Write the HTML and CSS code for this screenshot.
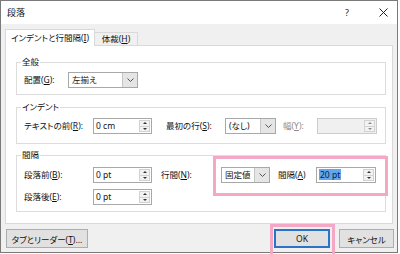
FILE: index.html
```html
<!DOCTYPE html>
<html lang="ja">
<head>
  <meta charset="UTF-8">
  <title>段落</title>
  <link rel="stylesheet" href="styles.css">
</head>
<body>

<div class="window">

  <!-- Title bar -->
  <div class="titlebar">
    <span class="title">段落</span>
    <span class="tb-help">?</span>
    <span class="tb-close">
      <svg width="9" height="9" viewBox="0 0 9 9"><path d="M0.5 0.5 L8.5 8.5 M8.5 0.5 L0.5 8.5" stroke="#222" stroke-width="1" fill="none"/></svg>
    </span>
  </div>

  <div class="body">

    <!-- Tabs -->
    <div class="tabs">
      <div class="tab active">インデントと行間隔(<u>I</u>)</div>
      <div class="tab">体裁(<u>H</u>)</div>
    </div>

    <div class="panel">

      <!-- General -->
      <fieldset class="group g1">
        <legend>全般</legend>
        <div class="row">
          <span class="lbl w-align-lbl">配置(<u>G</u>):</span>
          <div class="combo w-align">
            <span class="combo-text">左揃え</span>
            <span class="combo-btn"><svg width="7" height="4" viewBox="0 0 7 4"><path d="M0.5 0.5 L3.5 3.5 L6.5 0.5" stroke="#555" fill="none"/></svg></span>
          </div>
        </div>
      </fieldset>

      <!-- Indent -->
      <fieldset class="group g2">
        <legend>インデント</legend>
        <div class="row">
          <span class="lbl w-first">テキストの前(<u>R</u>):</span>
          <div class="spin w-small">
            <span class="spin-text">0 cm</span>
            <span class="spin-btns"><span class="up"></span><span class="dn"></span></span>
          </div>
          <span class="lbl w-firstline">最初の行(<u>S</u>):</span>
          <div class="combo w-none">
            <span class="combo-text">(なし)</span>
            <span class="combo-btn"><svg width="7" height="4" viewBox="0 0 7 4"><path d="M0.5 0.5 L3.5 3.5 L6.5 0.5" stroke="#555" fill="none"/></svg></span>
          </div>
          <span class="lbl w-width disabled">幅(<u>Y</u>):</span>
          <div class="spin w-wide disabled">
            <span class="spin-text"></span>
            <span class="spin-btns"><span class="up"></span><span class="dn"></span></span>
          </div>
        </div>
      </fieldset>

      <!-- Spacing -->
      <fieldset class="group g3">
        <legend>間隔</legend>
        <div class="row">
          <span class="lbl w-first">段落前(<u>B</u>):</span>
          <div class="spin w-small">
            <span class="spin-text">0 pt</span>
            <span class="spin-btns"><span class="up"></span><span class="dn"></span></span>
          </div>
          <span class="lbl w-line">行間(<u>N</u>):</span>
          <div class="combo w-fixed">
            <span class="combo-text">固定値</span>
            <span class="combo-btn"><svg width="7" height="4" viewBox="0 0 7 4"><path d="M0.5 0.5 L3.5 3.5 L6.5 0.5" stroke="#555" fill="none"/></svg></span>
          </div>
          <span class="lbl w-at">間隔(<u>A</u>)</span>
          <div class="spin w-at-input">
            <span class="spin-text"><span class="sel">20 pt</span></span>
            <span class="spin-btns"><span class="up"></span><span class="dn"></span></span>
          </div>
        </div>
        <div class="row row2">
          <span class="lbl w-first">段落後(<u>E</u>):</span>
          <div class="spin w-small">
            <span class="spin-text">0 pt</span>
            <span class="spin-btns"><span class="up"></span><span class="dn"></span></span>
          </div>
        </div>
      </fieldset>

    </div>

    <!-- Buttons -->
    <div class="footer">
      <button class="btn btn-tabs">タブとリーダー(<u>T</u>)...</button>
      <button class="btn btn-ok">OK</button>
      <button class="btn btn-cancel">キャンセル</button>
    </div>

  </div>

  <!-- highlight marks -->
  <div class="mark mark-spacing"></div>
  <div class="mark mark-ok"></div>

</div>

</body>
</html>
```

FILE: styles.css
```css
* {
  box-sizing: border-box;
}
html, body {
  margin: 0;
  padding: 0;
  background: #fff;
  overflow: hidden;
}
body {
  width: 400px;
  height: 254px;
  font: 8.5px "Noto Sans", "Noto Sans CJK JP", sans-serif;
  font-feature-settings: "palt";
  color: #111;
}
u {
  text-decoration: underline;
  text-underline-offset: 1px;
}
.window {
  position: relative;
  width: 398px;
  height: 253px;
  border: 1px solid #7a7a7a;
  background: #f0f0f0;
}

/* title bar */
.titlebar {
  height: 23px;
  background: #fff;
  display: flex;
  align-items: center;
  padding-left: 6px;
}
.title {
  flex: 1;
  line-height: 12px;
  font-size: 9px;
}
.tb-help {
  width: 20px;
  text-align: center;
  margin-right: 12px;
  color: #222;
  font-size: 9px;
}
.tb-close {
  width: 28px;
  display: flex;
  justify-content: center;
}

/* tabs */
.body {
  padding: 5px 4px 0 4px;
}
.tabs {
  display: flex;
  align-items: flex-end;
  height: 16px;
}
.tab {
  height: 13px;
  line-height: 12px;
  padding: 0 4px;
  border: 1px solid #d9d9d9;
  border-bottom: none;
  background: #f0f0f0;
  white-space: nowrap;
  text-align: center;
}
.tab.active {
  position: relative;
  z-index: 1;
  width: 90px;
  height: 17px;
  line-height: 16px;
  margin-bottom: -1px;
  background: #fff;
  padding: 0;
}
.tab:not(.active) {
  width: 43px;
  padding: 0;
  border-left: none;
}
.panel {
  height: 179px;
  background: #fff;
  border: 1px solid #d9d9d9;
  padding: 10px 6px 0 10px;
}

/* group boxes */
.group {
  margin: 0;
  border: 1px solid #dcdcdc;
  padding: 0 0 0 7px;
  min-width: 0;
}
.group legend {
  line-height: 12px;
  padding: 0 1px;
  margin-left: -3px;
}
.g1 {
  padding-top: 4px;
  padding-bottom: 6px;
}
.g2 {
  margin-top: 6px;
  padding-top: 5px;
  padding-bottom: 9px;
}
.g3 {
  margin-top: 5px;
  padding-top: 6px;
  padding-bottom: 6px;
}
.row {
  display: flex;
  align-items: center;
  height: 16px;
  white-space: nowrap;
}
.row2 {
  margin-top: 6px;
}
.lbl {
  line-height: 12px;
}
.lbl.disabled {
  color: #8a8a8a;
}
.w-align-lbl { width: 44px; }
.w-first { width: 69px; }
.w-firstline { width: 59px; margin-left: 14px; }
.w-width { width: 34px; margin-left: 7px; }
.w-line { width: 60px; margin-left: 9px; }
.w-at { width: 38px; margin-left: 8px; }

/* combo boxes */
.combo {
  display: flex;
  height: 16px;
  border: 1px solid #a8a8a8;
  background: #fff;
}
.combo-text {
  flex: 1;
  padding-left: 3px;
  line-height: 14px;
}
.combo-btn {
  width: 15px;
  background: #e5e5e5;
  border-left: 1px solid #c6c6c6;
  display: flex;
  align-items: center;
  justify-content: center;
}
.w-align { width: 70px; }
.w-none { width: 51px; }
.w-fixed { width: 49px; }

/* spin inputs */
.spin {
  display: flex;
  height: 16px;
  border: 1px solid #a8a8a8;
  background: #fff;
}
.spin.disabled {
  background: #f0f0f0;
  border-color: #cccccc;
}
.spin-text {
  flex: 1;
  padding-left: 2px;
  line-height: 14px;
}
.sel {
  background: #62a6eb;
  color: #0a1a40;
  padding: 0 1px;
}
.spin-btns {
  width: 11px;
  margin: 1px 1px 1px 0;
  display: flex;
  flex-direction: column;
  border: 1px solid #d2d2d2;
  background: #f2f2f2;
}
.spin-btns span {
  flex: 1;
  display: flex;
  align-items: center;
  justify-content: center;
}
.spin-btns .up {
  border-bottom: 1px solid #d2d2d2;
}
.spin-btns .up::before {
  content: "";
  border-left: 2.5px solid transparent;
  border-right: 2.5px solid transparent;
  border-bottom: 2.5px solid #333;
}
.spin-btns .dn::before {
  content: "";
  border-left: 2.5px solid transparent;
  border-right: 2.5px solid transparent;
  border-top: 2.5px solid #333;
}
.spin.disabled .spin-btns .up::before {
  border-bottom-color: #8a8a8a;
}
.spin.disabled .spin-btns .dn::before {
  border-top-color: #8a8a8a;
}
.w-small { width: 59px; }
.w-wide { width: 60px; }
.w-at-input { width: 60px; }

/* bottom buttons */
.footer {
  display: flex;
  margin-top: 5px;
  padding-left: 1px;
}
.btn {
  height: 19px;
  padding: 0;
  font: inherit;
  color: #111;
  background: #e1e1e1;
  border: 1px solid #adadad;
  white-space: nowrap;
}
.btn-tabs {
  width: 82px;
}
.btn-ok {
  width: 56px;
  margin-left: auto;
  border-color: #2a73c7;
  box-shadow: inset 0 0 0 1px #2a73c7;
}
.btn-cancel {
  width: 55px;
  margin-left: 9px;
  margin-right: -1px;
}

/* annotation marks */
.mark {
  position: absolute;
  border: 3px solid #f3a8c6;
}
.mark-spacing {
  left: 212px;
  top: 155px;
  width: 175px;
  height: 40px;
}
.mark-ok {
  left: 269px;
  top: 223px;
  width: 65px;
  height: 40px;
}
```
